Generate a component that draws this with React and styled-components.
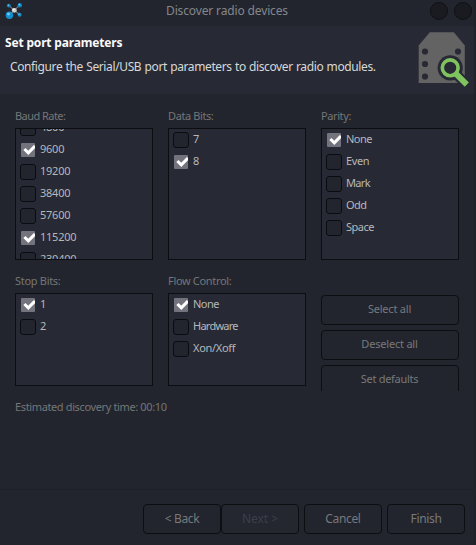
import React from "react";
import styled, { createGlobalStyle } from "styled-components";

const GlobalStyle = createGlobalStyle`
  *, *::before, *::after { box-sizing: border-box; }
  body { margin: 0; background: #22252d; }
  button { font: inherit; margin: 0; padding: 0; }
`;

const Window = styled.div`
  width: 476px;
  height: 545px;
  display: flex;
  flex-direction: column;
  overflow: hidden;
  background: #22252d;
  border-right: 2px solid #20222a;
  font-family: "Noto Sans", "Open Sans", sans-serif;
  font-size: 11px;
  line-height: 16px;
  color: #b6b8ba;
  white-space: nowrap;
`;

const TitleBar = styled.header`
  height: 26px;
  flex: none;
  display: grid;
  grid-template-columns: 60px 1fr 60px;
  background: #22252d;
`;

const AppIcon = styled.svg`
  display: block;
  width: 24px;
  height: 24px;
`;

const WindowTitle = styled.h1`
  margin: 3px 0 0 -20px;
  font-size: 12px;
  font-weight: 400;
  line-height: 16px;
  letter-spacing: -0.14px;
  text-align: center;
  color: #85878b;
`;

const WindowControls = styled.div`
  display: flex;
  gap: 6px;
  padding: 2px 0 0 16px;
`;

const ControlDot = styled.button`
  width: 18px;
  height: 18px;
  border: 1px solid #101115;
  border-radius: 50%;
  background: #1a1b20;
`;

const Banner = styled.section`
  height: 68px;
  flex: none;
  display: flex;
  justify-content: space-between;
  background: #272934;
`;

const BannerTitle = styled.h2`
  margin: 9px 0 0 5px;
  font-size: 12px;
  font-weight: 700;
  line-height: 16px;
  letter-spacing: -0.17px;
  color: #fafafa;
`;

const BannerText = styled.p`
  margin: 8px 0 0 10px;
  font-size: 12px;
  line-height: 16px;
  letter-spacing: -0.38px;
  word-spacing: 0.5px;
  color: #d6d9d8;
`;

const DeviceIcon = styled.svg`
  display: block;
  width: 56px;
  height: 64px;
  flex: none;
`;

const Content = styled.main`
  height: 396px;
  flex: none;
  padding: 14px 15px 0;
  border-bottom: 1px solid #1e2027;
`;

const Row = styled.div`
  display: grid;
  grid-template-columns: repeat(3, 138px);
  column-gap: 15px;
  height: ${(p) => p.$height}px;
`;

const Label = styled.div`
  height: 20px;
  line-height: 16px;
  letter-spacing: ${(p) => p.$track}px;
  color: #747678;
`;

const List = styled.ul`
  height: ${(p) => p.$height}px;
  margin: 0;
  padding: 3px 0 0 4px;
  list-style: none;
  overflow: hidden;
  border: 1px solid #0c0d11;
  background: #272934;
`;

const Items = styled.div`
  margin-top: ${(p) => -p.$scroll}px;
`;

const Item = styled.li`
  display: flex;
  gap: 4px;
  height: 22px;
`;

const CheckBox = styled.span`
  width: 16px;
  height: 16px;
  flex: none;
  display: flex;
  align-items: center;
  justify-content: center;
  border: 1px solid ${(p) => (p.$on ? "transparent" : "#0b0c10")};
  border-radius: ${(p) => (p.$on ? 2 : 3)}px;
  background: ${(p) => (p.$on ? "#72737d" : "#22252d")};
  background-clip: padding-box;
`;

const CheckMark = styled.svg`
  display: block;
  width: 14px;
  height: 14px;
`;

const ItemText = styled.span`
  height: 16px;
  line-height: 14px;
  letter-spacing: ${(p) => p.$track}px;
`;

const ButtonColumn = styled.div`
  display: flex;
  flex-direction: column;
  gap: 5px;
  height: 118px;
  padding-top: 22px;
  overflow: hidden;
`;

const Button = styled.button`
  width: 78px;
  height: 30px;
  flex: none;
  border: 1px solid #0d0e12;
  border-radius: 4px;
  background: ${(p) => (p.$off ? "#242630" : "#22252d")};
  font-size: 12px;
  line-height: 28px;
  letter-spacing: ${(p) => p.$track}px;
  color: ${(p) => (p.$off ? "#3c3f4a" : "#77797b")};
`;

const WideButton = styled(Button)`
  width: 138px;
  padding: 0 1px 2px 0;
  font-size: 11px;
  line-height: 26px;
`;

const Estimate = styled.p`
  margin: 8px 0 0;
  line-height: 16px;
  letter-spacing: -0.37px;
  color: #747678;
`;

const Footer = styled.footer`
  flex: 1;
  display: flex;
  justify-content: flex-end;
  gap: 5px;
  padding: 14px 9px 0 0;
`;

const ButtonPair = styled.div`
  display: flex;
`;

const Molecule = () => (
  <AppIcon viewBox="0 0 24 24">
    <path d="M8.8 5.5L14.3 10.3L19.8 5M9.3 15L14.3 10.3L19.5 14.5" stroke="#777a7f" strokeWidth="1.1" fill="none" />
    <circle cx="14.3" cy="10.3" r="2.4" fill="#c9cacb" />
    <circle cx="13.6" cy="9.6" r="1.1" fill="#f4f4f4" />
    <circle cx="8.8" cy="5.6" r="1.9" fill="#1287c4" />
    <circle cx="8.4" cy="5.1" r="0.7" fill="#7fd0f4" />
    <circle cx="19.8" cy="5.2" r="2.2" fill="#1287c4" />
    <circle cx="19.3" cy="4.6" r="0.8" fill="#7fd0f4" />
    <circle cx="19.6" cy="14.7" r="2" fill="#1287c4" />
    <circle cx="19.1" cy="14.2" r="0.7" fill="#7fd0f4" />
    <circle cx="9.4" cy="15.2" r="3.7" fill="#168fcf" />
    <circle cx="8.5" cy="14.1" r="1.4" fill="#70cdf6" />
  </AppIcon>
);

const Device = () => (
  <DeviceIcon viewBox="418 26 56 64">
    <path d="M429.8 32.3H453.8L464.8 45.5V83H418.7V45.5Z" fill="#636364" />
    <g fill="#272934">
      <circle cx="425" cy="51.5" r="3.1" />
      <circle cx="425" cy="64" r="3.1" />
      <circle cx="425" cy="76.5" r="3.1" />
      <circle cx="458" cy="51.5" r="3.1" />
      <circle cx="450.2" cy="67.8" r="12.6" />
    </g>
    <path d="M457 75L467.5 85.5" stroke="#272934" strokeWidth="10" />
    <path d="M455.3 73.1L466.8 84.6" stroke="#7fc35f" strokeWidth="5.8" />
    <circle cx="450.2" cy="67.8" r="7.9" fill="none" stroke="#7fc35f" strokeWidth="3.6" />
  </DeviceIcon>
);

const Group = ({ label, track, height, scroll = 0, items }) => (
  <div>
    <Label $track={track}>{label}</Label>
    <List $height={height}>
      <Items $scroll={scroll}>
        {items.map(([text, on, itemTrack]) => (
          <Item key={text}>
            <CheckBox $on={on}>
              {on && (
                <CheckMark viewBox="0 0 14 14">
                  <path d="M3.4 6L7.3 9.8L14 3" fill="none" stroke="#fff" strokeWidth="3.1" />
                </CheckMark>
              )}
            </CheckBox>
            <ItemText $track={itemTrack}>{text}</ItemText>
          </Item>
        ))}
      </Items>
    </List>
  </div>
);

const BAUD = [
  ["4800", false, -0.25],
  ["9600", true, -0.25],
  ["19200", false, -0.25],
  ["38400", false, -0.25],
  ["57600", false, -0.25],
  ["115200", true, -0.25],
  ["230400", false, -0.25],
];
const DATA_BITS = [["7", false, 0], ["8", true, 0]];
const PARITY = [
  ["None", true, -0.5],
  ["Even", false, -0.35],
  ["Mark", false, -0.65],
  ["Odd", false, -0.5],
  ["Space", false, -0.5],
];
const STOP_BITS = [["1", true, 0], ["2", false, 0]];
const FLOW = [
  ["None", true, -0.5],
  ["Hardware", false, -0.75],
  ["Xon/Xoff", false, -0.3],
];

export default function App() {
  return (
    <Window>
      <GlobalStyle />
      <TitleBar>
        <Molecule />
        <WindowTitle>Discover radio devices</WindowTitle>
        <WindowControls>
          <ControlDot aria-label="Minimize" />
          <ControlDot aria-label="Close" />
        </WindowControls>
      </TitleBar>
      <Banner>
        <div>
          <BannerTitle>Set port parameters</BannerTitle>
          <BannerText>Configure the Serial/USB port parameters to discover radio modules.</BannerText>
        </div>
        <Device />
      </Banner>
      <Content>
        <Row $height={165}>
          <Group label="Baud Rate:" track={-0.55} height={132} scroll={12} items={BAUD} />
          <Group label="Data Bits:" track={-0.4} height={132} items={DATA_BITS} />
          <Group label="Parity:" track={-0.4} height={132} items={PARITY} />
        </Row>
        <Row $height={118}>
          <Group label="Stop Bits:" track={-0.3} height={93} items={STOP_BITS} />
          <Group label="Flow Control:" track={-0.33} height={93} items={FLOW} />
          <ButtonColumn>
            <WideButton $track={-0.2}>Select all</WideButton>
            <WideButton $track={-0.2}>Deselect all</WideButton>
            <WideButton $track={-0.3}>Set defaults</WideButton>
          </ButtonColumn>
        </Row>
        <Estimate>Estimated discovery time: 00:10</Estimate>
      </Content>
      <Footer>
        <ButtonPair>
          <Button $track={-0.35}>&lt; Back</Button>
          <Button $track={-0.05} $off>Next &gt;</Button>
        </ButtonPair>
        <Button $track={-0.35}>Cancel</Button>
        <Button $track={-0.35}>Finish</Button>
      </Footer>
    </Window>
  );
}
